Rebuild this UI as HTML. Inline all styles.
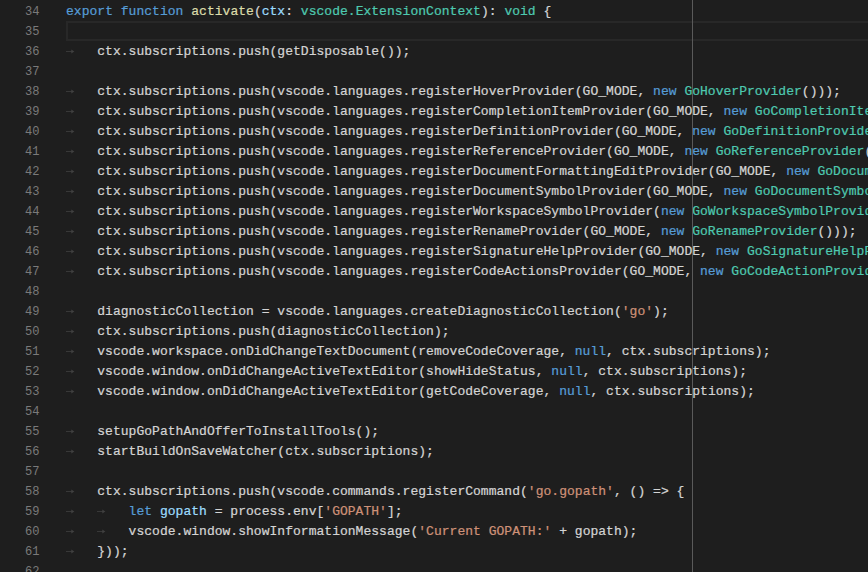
<!DOCTYPE html><html><head><meta charset="utf-8"><style>
html,body{margin:0;padding:0;}
body{width:868px;height:572px;overflow:hidden;background:#1e1e1e;position:relative;font-family:"Liberation Mono",monospace;}
.ln{position:absolute;left:0;width:39.6px;text-align:right;color:#7a7a7a;font-size:13px;line-height:20px;height:20px;white-space:pre;letter-spacing:0.0266px;transform-origin:right 13.5px;transform:scale(0.93,1.05);-webkit-text-stroke:0px currentColor;}
.l{position:absolute;left:66px;height:20px;line-height:20px;font-size:13px;white-space:pre;color:#d4d4d4;letter-spacing:0.0266px;transform-origin:0 13.5px;transform:scaleY(1.05);-webkit-text-stroke:0.22px currentColor;}
.k{color:#569cd6} .f{color:#dcdcaa} .p{color:#9cdcfe} .t{color:#4ec9b0} .s{color:#ce9178}
.cur{position:absolute;left:66px;right:0;box-sizing:border-box;border:2px solid #282828;border-right:none;height:20px;}
.ruler{position:absolute;top:0;bottom:0;left:692px;width:1px;background:#5a5a5a;}
.ar{position:absolute;width:9px;height:5px;}
</style></head><body>
<div class="ln" style="top:2px">34</div>
<div class="l" style="top:2.4px;left:66.00px"><span class="k">export</span> <span class="k">function</span> <span class="f">activate</span>(<span class="p">ctx</span>: <span class="t">vscode.ExtensionContext</span>): <span class="t">void</span> {</div>
<div class="ln" style="top:22px">35</div>
<div class="cur" style="top:21px"></div>
<div class="ln" style="top:42px">36</div>
<svg class="ar" style="left:66.00px;top:49px" viewBox="0 0 9 5"><path d="M0 2.5H6" stroke="#383838" stroke-width="1"/><path d="M5.3 0.6L8.3 2.5L5.3 4.4Z" fill="#404040"/></svg>
<div class="l" style="top:42.4px;left:97.31px">ctx.subscriptions.push(getDisposable());</div>
<div class="ln" style="top:62px">37</div>
<div class="ln" style="top:82px">38</div>
<svg class="ar" style="left:66.00px;top:89px" viewBox="0 0 9 5"><path d="M0 2.5H6" stroke="#383838" stroke-width="1"/><path d="M5.3 0.6L8.3 2.5L5.3 4.4Z" fill="#404040"/></svg>
<div class="l" style="top:82.4px;left:97.31px">ctx.subscriptions.push(vscode.languages.registerHoverProvider(GO_MODE, <span class="k">new</span> <span class="t">GoHoverProvider</span>()));</div>
<div class="ln" style="top:102px">39</div>
<svg class="ar" style="left:66.00px;top:109px" viewBox="0 0 9 5"><path d="M0 2.5H6" stroke="#383838" stroke-width="1"/><path d="M5.3 0.6L8.3 2.5L5.3 4.4Z" fill="#404040"/></svg>
<div class="l" style="top:102.4px;left:97.31px">ctx.subscriptions.push(vscode.languages.registerCompletionItemProvider(GO_MODE, <span class="k">new</span> <span class="t">GoCompletionItemProvider</span>(), <span class="s">&#x27;.&#x27;</span>, <span class="s">&#x27;\&quot;&#x27;</span>));</div>
<div class="ln" style="top:122px">40</div>
<svg class="ar" style="left:66.00px;top:129px" viewBox="0 0 9 5"><path d="M0 2.5H6" stroke="#383838" stroke-width="1"/><path d="M5.3 0.6L8.3 2.5L5.3 4.4Z" fill="#404040"/></svg>
<div class="l" style="top:122.4px;left:97.31px">ctx.subscriptions.push(vscode.languages.registerDefinitionProvider(GO_MODE, <span class="k">new</span> <span class="t">GoDefinitionProvider</span>()));</div>
<div class="ln" style="top:142px">41</div>
<svg class="ar" style="left:66.00px;top:149px" viewBox="0 0 9 5"><path d="M0 2.5H6" stroke="#383838" stroke-width="1"/><path d="M5.3 0.6L8.3 2.5L5.3 4.4Z" fill="#404040"/></svg>
<div class="l" style="top:142.4px;left:97.31px">ctx.subscriptions.push(vscode.languages.registerReferenceProvider(GO_MODE, <span class="k">new</span> <span class="t">GoReferenceProvider</span>()));</div>
<div class="ln" style="top:162px">42</div>
<svg class="ar" style="left:66.00px;top:169px" viewBox="0 0 9 5"><path d="M0 2.5H6" stroke="#383838" stroke-width="1"/><path d="M5.3 0.6L8.3 2.5L5.3 4.4Z" fill="#404040"/></svg>
<div class="l" style="top:162.4px;left:97.31px">ctx.subscriptions.push(vscode.languages.registerDocumentFormattingEditProvider(GO_MODE, <span class="k">new</span> <span class="t">GoDocumentFormattingEditProvider</span>()));</div>
<div class="ln" style="top:182px">43</div>
<svg class="ar" style="left:66.00px;top:189px" viewBox="0 0 9 5"><path d="M0 2.5H6" stroke="#383838" stroke-width="1"/><path d="M5.3 0.6L8.3 2.5L5.3 4.4Z" fill="#404040"/></svg>
<div class="l" style="top:182.4px;left:97.31px">ctx.subscriptions.push(vscode.languages.registerDocumentSymbolProvider(GO_MODE, <span class="k">new</span> <span class="t">GoDocumentSymbolProvider</span>()));</div>
<div class="ln" style="top:202px">44</div>
<svg class="ar" style="left:66.00px;top:209px" viewBox="0 0 9 5"><path d="M0 2.5H6" stroke="#383838" stroke-width="1"/><path d="M5.3 0.6L8.3 2.5L5.3 4.4Z" fill="#404040"/></svg>
<div class="l" style="top:202.4px;left:97.31px">ctx.subscriptions.push(vscode.languages.registerWorkspaceSymbolProvider(<span class="k">new</span> <span class="t">GoWorkspaceSymbolProvider</span>()));</div>
<div class="ln" style="top:222px">45</div>
<svg class="ar" style="left:66.00px;top:229px" viewBox="0 0 9 5"><path d="M0 2.5H6" stroke="#383838" stroke-width="1"/><path d="M5.3 0.6L8.3 2.5L5.3 4.4Z" fill="#404040"/></svg>
<div class="l" style="top:222.4px;left:97.31px">ctx.subscriptions.push(vscode.languages.registerRenameProvider(GO_MODE, <span class="k">new</span> <span class="t">GoRenameProvider</span>()));</div>
<div class="ln" style="top:242px">46</div>
<svg class="ar" style="left:66.00px;top:249px" viewBox="0 0 9 5"><path d="M0 2.5H6" stroke="#383838" stroke-width="1"/><path d="M5.3 0.6L8.3 2.5L5.3 4.4Z" fill="#404040"/></svg>
<div class="l" style="top:242.4px;left:97.31px">ctx.subscriptions.push(vscode.languages.registerSignatureHelpProvider(GO_MODE, <span class="k">new</span> <span class="t">GoSignatureHelpProvider</span>(), <span class="s">&#x27;(&#x27;</span>, <span class="s">&#x27;,&#x27;</span>));</div>
<div class="ln" style="top:262px">47</div>
<svg class="ar" style="left:66.00px;top:269px" viewBox="0 0 9 5"><path d="M0 2.5H6" stroke="#383838" stroke-width="1"/><path d="M5.3 0.6L8.3 2.5L5.3 4.4Z" fill="#404040"/></svg>
<div class="l" style="top:262.4px;left:97.31px">ctx.subscriptions.push(vscode.languages.registerCodeActionsProvider(GO_MODE, <span class="k">new</span> <span class="t">GoCodeActionProvider</span>()));</div>
<div class="ln" style="top:282px">48</div>
<div class="ln" style="top:302px">49</div>
<svg class="ar" style="left:66.00px;top:309px" viewBox="0 0 9 5"><path d="M0 2.5H6" stroke="#383838" stroke-width="1"/><path d="M5.3 0.6L8.3 2.5L5.3 4.4Z" fill="#404040"/></svg>
<div class="l" style="top:302.4px;left:97.31px">diagnosticCollection = vscode.languages.createDiagnosticCollection(<span class="s">&#x27;go&#x27;</span>);</div>
<div class="ln" style="top:322px">50</div>
<svg class="ar" style="left:66.00px;top:329px" viewBox="0 0 9 5"><path d="M0 2.5H6" stroke="#383838" stroke-width="1"/><path d="M5.3 0.6L8.3 2.5L5.3 4.4Z" fill="#404040"/></svg>
<div class="l" style="top:322.4px;left:97.31px">ctx.subscriptions.push(diagnosticCollection);</div>
<div class="ln" style="top:342px">51</div>
<svg class="ar" style="left:66.00px;top:349px" viewBox="0 0 9 5"><path d="M0 2.5H6" stroke="#383838" stroke-width="1"/><path d="M5.3 0.6L8.3 2.5L5.3 4.4Z" fill="#404040"/></svg>
<div class="l" style="top:342.4px;left:97.31px">vscode.workspace.onDidChangeTextDocument(removeCodeCoverage, <span class="k">null</span>, ctx.subscriptions);</div>
<div class="ln" style="top:362px">52</div>
<svg class="ar" style="left:66.00px;top:369px" viewBox="0 0 9 5"><path d="M0 2.5H6" stroke="#383838" stroke-width="1"/><path d="M5.3 0.6L8.3 2.5L5.3 4.4Z" fill="#404040"/></svg>
<div class="l" style="top:362.4px;left:97.31px">vscode.window.onDidChangeActiveTextEditor(showHideStatus, <span class="k">null</span>, ctx.subscriptions);</div>
<div class="ln" style="top:382px">53</div>
<svg class="ar" style="left:66.00px;top:389px" viewBox="0 0 9 5"><path d="M0 2.5H6" stroke="#383838" stroke-width="1"/><path d="M5.3 0.6L8.3 2.5L5.3 4.4Z" fill="#404040"/></svg>
<div class="l" style="top:382.4px;left:97.31px">vscode.window.onDidChangeActiveTextEditor(getCodeCoverage, <span class="k">null</span>, ctx.subscriptions);</div>
<div class="ln" style="top:402px">54</div>
<div class="ln" style="top:422px">55</div>
<svg class="ar" style="left:66.00px;top:429px" viewBox="0 0 9 5"><path d="M0 2.5H6" stroke="#383838" stroke-width="1"/><path d="M5.3 0.6L8.3 2.5L5.3 4.4Z" fill="#404040"/></svg>
<div class="l" style="top:422.4px;left:97.31px">setupGoPathAndOfferToInstallTools();</div>
<div class="ln" style="top:442px">56</div>
<svg class="ar" style="left:66.00px;top:449px" viewBox="0 0 9 5"><path d="M0 2.5H6" stroke="#383838" stroke-width="1"/><path d="M5.3 0.6L8.3 2.5L5.3 4.4Z" fill="#404040"/></svg>
<div class="l" style="top:442.4px;left:97.31px">startBuildOnSaveWatcher(ctx.subscriptions);</div>
<div class="ln" style="top:462px">57</div>
<div class="ln" style="top:482px">58</div>
<svg class="ar" style="left:66.00px;top:489px" viewBox="0 0 9 5"><path d="M0 2.5H6" stroke="#383838" stroke-width="1"/><path d="M5.3 0.6L8.3 2.5L5.3 4.4Z" fill="#404040"/></svg>
<div class="l" style="top:482.4px;left:97.31px">ctx.subscriptions.push(vscode.commands.registerCommand(<span class="s">&#x27;go.gopath&#x27;</span>, () =&gt; {</div>
<div class="ln" style="top:502px">59</div>
<svg class="ar" style="left:66.00px;top:509px" viewBox="0 0 9 5"><path d="M0 2.5H6" stroke="#383838" stroke-width="1"/><path d="M5.3 0.6L8.3 2.5L5.3 4.4Z" fill="#404040"/></svg>
<svg class="ar" style="left:97.31px;top:509px" viewBox="0 0 9 5"><path d="M0 2.5H6" stroke="#383838" stroke-width="1"/><path d="M5.3 0.6L8.3 2.5L5.3 4.4Z" fill="#404040"/></svg>
<div class="l" style="top:502.4px;left:128.62px"><span class="k">let</span> <span class="p">gopath</span> = process.env[<span class="s">&#x27;GOPATH&#x27;</span>];</div>
<div class="ln" style="top:522px">60</div>
<svg class="ar" style="left:66.00px;top:529px" viewBox="0 0 9 5"><path d="M0 2.5H6" stroke="#383838" stroke-width="1"/><path d="M5.3 0.6L8.3 2.5L5.3 4.4Z" fill="#404040"/></svg>
<svg class="ar" style="left:97.31px;top:529px" viewBox="0 0 9 5"><path d="M0 2.5H6" stroke="#383838" stroke-width="1"/><path d="M5.3 0.6L8.3 2.5L5.3 4.4Z" fill="#404040"/></svg>
<div class="l" style="top:522.4px;left:128.62px">vscode.window.showInformationMessage(<span class="s">&#x27;Current GOPATH:&#x27;</span> + gopath);</div>
<div class="ln" style="top:542px">61</div>
<svg class="ar" style="left:66.00px;top:549px" viewBox="0 0 9 5"><path d="M0 2.5H6" stroke="#383838" stroke-width="1"/><path d="M5.3 0.6L8.3 2.5L5.3 4.4Z" fill="#404040"/></svg>
<div class="l" style="top:542.4px;left:97.31px">}));</div>
<div class="ln" style="top:562px">62</div>
<div class="ruler"></div>
</body></html>
